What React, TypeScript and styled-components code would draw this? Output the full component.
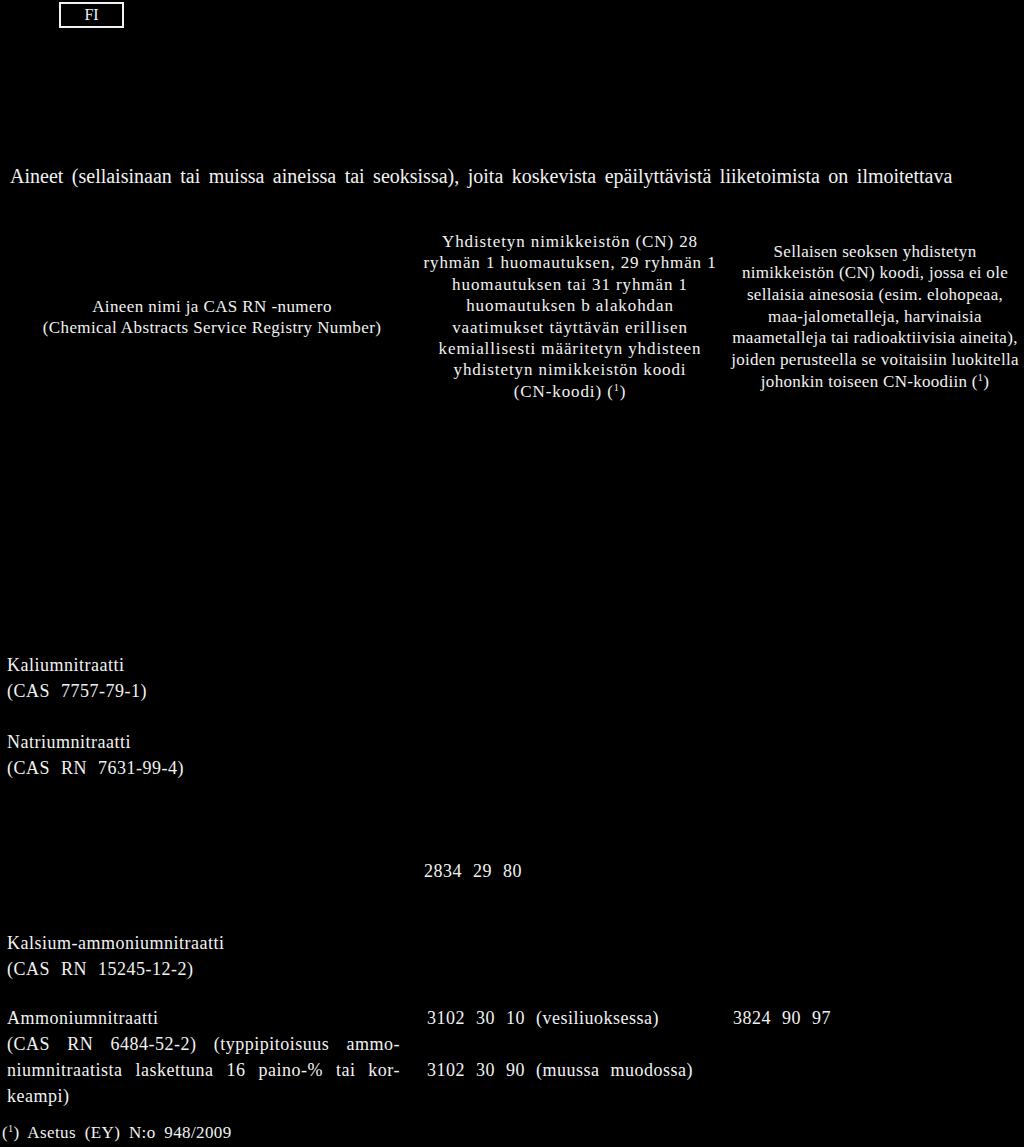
import React from "react"
import styled, { createGlobalStyle } from "styled-components"

const GlobalStyle = createGlobalStyle`
  html, body {
    margin: 0;
    padding: 0;
    background: #000;
  }
  body {
    color: #f2f2f2;
    font-family: "Liberation Serif", "DejaVu Serif", serif;
  }
`

const Page = styled.div`
  width: 1024px;
  height: 1147px;
  overflow: hidden;
  background: #000;
  display: flex;
  flex-direction: column;

  & > * {
    flex: none;
  }
`

const LangBox = styled.div`
  margin: 2px 0 0 59px;
  width: 65px;
  height: 26px;
  box-sizing: border-box;
  border: 2px solid #f2f2f2;
  display: flex;
  align-items: center;
  justify-content: center;
  font-size: 16px;
`

const Title = styled.h1`
  margin: 137px 0 0 10px;
  font-size: 20px;
  font-weight: normal;
  line-height: 22px;
  word-spacing: 3.5px;
  white-space: nowrap;
`

const Row = styled.div<{ $top: number; $align?: string }>`
  display: grid;
  grid-template-columns: 415px 305px 1fr;
  align-items: ${p => p.$align || "start"};
  margin-top: ${p => p.$top}px;
`

const HeadCell = styled.div<{ $lh: number; $left?: number; $spacing?: number }>`
  text-align: center;
  font-size: 17px;
  line-height: ${p => p.$lh}px;
  letter-spacing: ${p => p.$spacing || 0}px;
  padding-left: ${p => p.$left || 0}px;
  white-space: nowrap;
`

const Cell = styled.div<{ $left: number; $width?: number }>`
  padding-left: ${p => p.$left}px;
  font-size: 18px;
  line-height: 26px;
  letter-spacing: 0.5px;
  word-spacing: 6px;
  ${p => p.$width ? `width: ${p.$width}px;` : ""}
`

const Line = styled.div<{ $justify?: boolean }>`
  white-space: nowrap;
  ${p => p.$justify ? `
    text-align: justify;
    text-align-last: justify;
    word-spacing: 0;
  ` : ""}
`

const Gap = styled.div`
  height: 26px;
`

const Sup = styled.sup`
  font-size: 0.6em;
  line-height: 0;
  vertical-align: 0.55em;
`

const Note = styled.div`
  margin: 14px 0 0 2px;
  font-size: 17px;
  line-height: 20px;
  letter-spacing: 0.4px;
  word-spacing: 4px;
`

const Ref = () => (
  <>(<Sup>1</Sup>)</>
)

const col2Head = [
  "Yhdistetyn nimikkeistön (CN) 28",
  "ryhmän 1 huomautuksen, 29 ryhmän 1",
  "huomautuksen tai 31 ryhmän 1",
  "huomautuksen b alakohdan",
  "vaatimukset täyttävän erillisen",
  "kemiallisesti määritetyn yhdisteen",
  "yhdistetyn nimikkeistön koodi",
]

const col3Head = [
  "Sellaisen seoksen yhdistetyn",
  "nimikkeistön (CN) koodi, jossa ei ole",
  "sellaisia ainesosia (esim. elohopeaa,",
  "maa-jalometalleja, harvinaisia",
  "maametalleja tai radioaktiivisia aineita),",
  "joiden perusteella se voitaisiin luokitella",
]

export default function App() {
  return (
    <Page>
      <GlobalStyle />
      <LangBox>FI</LangBox>

      <Title>
        Aineet (sellaisinaan tai muissa aineissa tai seoksissa), joita koskevista epäilyttävistä liiketoimista on ilmoitettava
      </Title>

      <Row $top={44} $align="center">
        <HeadCell $lh={21} $left={9} $spacing={0.4}>
          <Line>Aineen nimi ja CAS RN -numero</Line>
          <Line>(Chemical Abstracts Service Registry Number)</Line>
        </HeadCell>
        <HeadCell $lh={21.4} $left={5} $spacing={0.9}>
          {col2Head.map(l => <Line key={l}>{l}</Line>)}
          <Line>(CN-koodi) <Ref /></Line>
        </HeadCell>
        <HeadCell $lh={21.7} $left={6} $spacing={0.3}>
          {col3Head.map(l => <Line key={l}>{l}</Line>)}
          <Line>johonkin toiseen CN-koodiin <Ref /></Line>
        </HeadCell>
      </Row>

      <Row $top={250}>
        <Cell $left={7}>
          <Line>Kaliumnitraatti</Line>
          <Line>(CAS 7757-79-1)</Line>
        </Cell>
      </Row>

      <Row $top={25}>
        <Cell $left={7}>
          <Line>Natriumnitraatti</Line>
          <Line>(CAS RN 7631-99-4)</Line>
        </Cell>
      </Row>

      <Row $top={77}>
        <div />
        <Cell $left={9}>
          <Line>2834 29 80</Line>
        </Cell>
      </Row>

      <Row $top={46}>
        <Cell $left={7}>
          <Line>Kalsium-ammoniumnitraatti</Line>
          <Line>(CAS RN 15245-12-2)</Line>
        </Cell>
      </Row>

      <Row $top={23}>
        <Cell $left={7} $width={393}>
          <Line>Ammoniumnitraatti</Line>
          <Line $justify>(CAS RN 6484-52-2) (typpipitoisuus ammo-</Line>
          <Line $justify>niumnitraatista laskettuna 16 paino-% tai kor-</Line>
          <Line>keampi)</Line>
        </Cell>
        <Cell $left={12}>
          <Line>3102 30 10 (vesiliuoksessa)</Line>
          <Gap />
          <Line>3102 30 90 (muussa muodossa)</Line>
        </Cell>
        <Cell $left={13}>
          <Line>3824 90 97</Line>
        </Cell>
      </Row>

      <Note>
        <Ref /> Asetus (EY) N:o 948/2009
      </Note>
    </Page>
  )
}
